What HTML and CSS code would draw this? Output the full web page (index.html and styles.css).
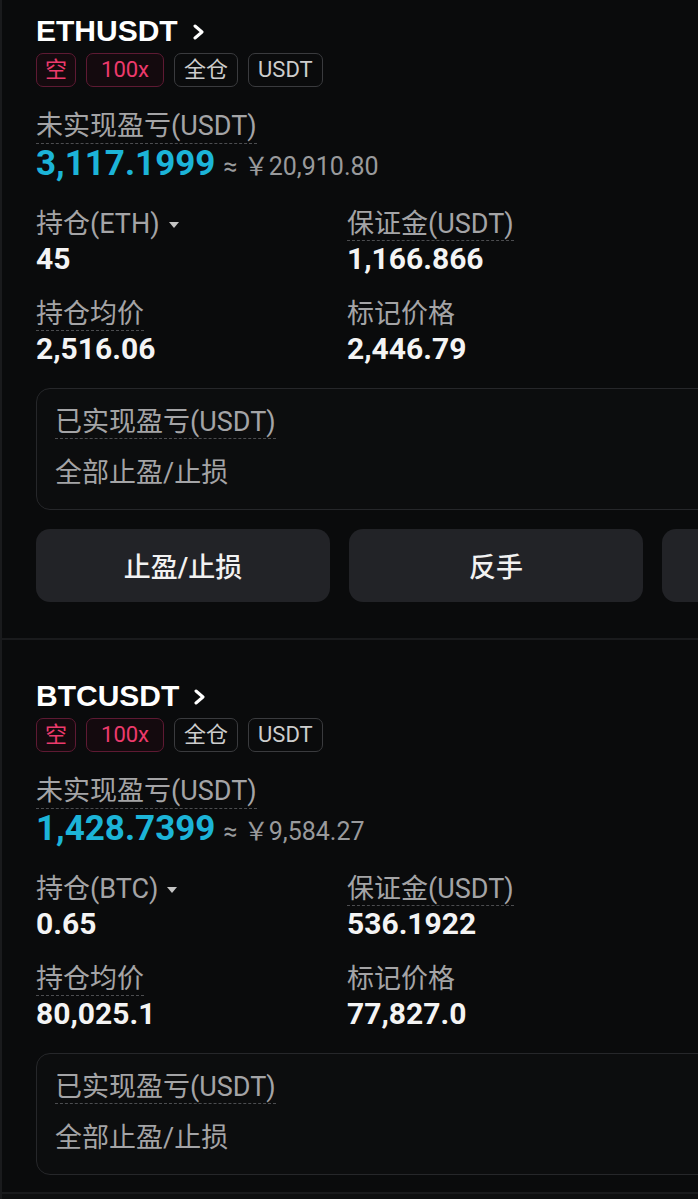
FILE: index.html
```html
<!DOCTYPE html>
<html lang="zh-CN">
<head>
<meta charset="UTF-8">
<meta name="viewport" content="width=device-width, initial-scale=1.0">
<title>持仓</title>
<link rel="stylesheet" href="styles.css">
</head>
<body>

<div class="screen">

    <section class="position">
        <div class="symbol">
            ETHUSDT
            <svg class="chevron" width="14" height="16" viewBox="0 0 14 16"><polyline points="3,2 10,8 3,14" fill="none" stroke="#fff" stroke-width="3" stroke-linecap="round" stroke-linejoin="round"/></svg>
        </div>
        <div class="tags">
            <span class="tag tag-short">空</span>
            <span class="tag tag-short tag-lev">100x</span>
            <span class="tag">全仓</span>
            <span class="tag">USDT</span>
        </div>
        <div class="pnl">
            <span class="label dotted">未实现盈亏(USDT)</span>
            <div class="pnl-value">
                <span class="pnl-num">3,117.1999</span>
                <span class="pnl-cny">≈ ￥20,910.80</span>
            </div>
        </div>
        <div class="stats">
            <div class="stat">
                <span class="label">持仓(ETH)<svg class="caret" width="12" height="8" viewBox="0 0 12 8"><path d="M1 1h10L6 7z" fill="#c4c4c4"/></svg></span>
                <span class="value">45</span>
            </div>
            <div class="stat">
                <span class="label dotted">保证金(USDT)</span>
                <span class="value">1,166.866</span>
            </div>
            <div class="stat">
                <span class="label dotted">持仓均价</span>
                <span class="value">2,516.06</span>
            </div>
            <div class="stat">
                <span class="label">标记价格</span>
                <span class="value">2,446.79</span>
            </div>
        </div>
        <div class="realized">
            <span class="label dotted">已实现盈亏(USDT)</span>
            <span class="label tpsl">全部止盈/止损</span>
        </div>
        <div class="actions">
            <button class="action">止盈/止损</button>
            <button class="action">反手</button>
            <button class="action" aria-label="平仓"></button>
        </div>
    </section>

    <section class="position no-actions">
        <div class="symbol">
            BTCUSDT
            <svg class="chevron" width="14" height="16" viewBox="0 0 14 16"><polyline points="3,2 10,8 3,14" fill="none" stroke="#fff" stroke-width="3" stroke-linecap="round" stroke-linejoin="round"/></svg>
        </div>
        <div class="tags">
            <span class="tag tag-short">空</span>
            <span class="tag tag-short tag-lev">100x</span>
            <span class="tag">全仓</span>
            <span class="tag">USDT</span>
        </div>
        <div class="pnl">
            <span class="label dotted">未实现盈亏(USDT)</span>
            <div class="pnl-value">
                <span class="pnl-num">1,428.7399</span>
                <span class="pnl-cny">≈ ￥9,584.27</span>
            </div>
        </div>
        <div class="stats">
            <div class="stat">
                <span class="label">持仓(BTC)<svg class="caret" width="12" height="8" viewBox="0 0 12 8"><path d="M1 1h10L6 7z" fill="#c4c4c4"/></svg></span>
                <span class="value">0.65</span>
            </div>
            <div class="stat">
                <span class="label dotted">保证金(USDT)</span>
                <span class="value">536.1922</span>
            </div>
            <div class="stat">
                <span class="label dotted">持仓均价</span>
                <span class="value">80,025.1</span>
            </div>
            <div class="stat">
                <span class="label">标记价格</span>
                <span class="value">77,827.0</span>
            </div>
        </div>
        <div class="realized">
            <span class="label dotted">已实现盈亏(USDT)</span>
            <span class="label tpsl">全部止盈/止损</span>
        </div>
    </section>

    <div class="bottom-bar"></div>

</div>

</body>
</html>
```

FILE: styles.css
```css
/* Position list, dark theme */
html, body {
    margin: 0;
    background-color: #0a0b0c;
}

body {
    font-family: Roboto, "Noto Sans CJK SC", sans-serif;
    color: #f2f2f2;
}

.screen {
    min-height: 1199px;
    overflow: hidden;
    border-left: 2px solid #1a1b1d;
}

.position {
    padding: 38px 0 36px 34px;
    border-bottom: 2px solid #1a1b1d;
}

.position:first-child {
    padding-top: 13px;
}

.position.no-actions {
    padding-bottom: 17px;
}

.symbol {
    display: flex;
    align-items: center;
    gap: 14px;
    font-family: "Liberation Sans", Arial, sans-serif;
    font-weight: bold;
    font-size: 30px;
    line-height: 36px;
    color: #fff;
}

.chevron {
    margin-top: 1px;
}

.tags {
    display: flex;
    gap: 10px;
    margin-top: 4px;
}

.tag {
    box-sizing: border-box;
    height: 34px;
    padding: 0 9px;
    border: 1.5px solid #3a3b3e;
    border-radius: 7px;
    font-size: 22px;
    line-height: 31px;
    color: #cdcdcd;
}

.tag-short {
    padding: 0 8px;
    border-color: #5e1a33;
    background-color: #140a0e;
    color: #ec3a6c;
}

.tag-short.tag-lev {
    padding: 0 14px;
}

.label {
    display: block;
    width: fit-content;
    font-size: 27px;
    line-height: 32px;
    color: #a4a4a6;
    border-bottom: 1px solid transparent;
}

.label.dotted {
    border-bottom: 1px dashed #4c4d50;
}

.pnl {
    margin-top: 22px;
}

.pnl .label {
    line-height: 34px;
}

.pnl-value {
    display: flex;
    align-items: baseline;
    line-height: 40px;
}

.pnl-num {
    font-size: 35px;
    font-weight: bold;
    color: #1cb4d8;
}

.pnl-cny {
    margin-left: 8px;
    font-size: 25px;
    color: #999a9c;
}

.stats {
    display: grid;
    grid-template-columns: 311px 1fr;
    row-gap: 21px;
    margin-top: 21px;
}

.stat {
    display: flex;
    flex-direction: column;
}

.caret {
    margin-left: 8px;
    vertical-align: 4px;
}

.value {
    font-size: 30px;
    font-weight: bold;
    line-height: 36px;
    color: #f4f4f4;
}

.realized {
    box-sizing: border-box;
    width: 920px;
    margin-top: 21px;
    padding: 17px 18px 19px;
    border: 1px solid #26272a;
    border-radius: 14px;
    background-color: #0c0d0e;
}

.realized .tpsl {
    margin-top: 18px;
}

.actions {
    display: grid;
    grid-template-columns: repeat(3, 294px);
    gap: 19px;
    margin-top: 19px;
}

.action {
    height: 73px;
    border: none;
    border-radius: 14px;
    background-color: #222327;
    color: #f2f2f2;
    font-family: Roboto, "Noto Sans CJK SC", sans-serif;
    font-size: 27px;
    font-weight: 500;
}

.bottom-bar {
    height: 40px;
    background-color: #0e0f10;
}
```
